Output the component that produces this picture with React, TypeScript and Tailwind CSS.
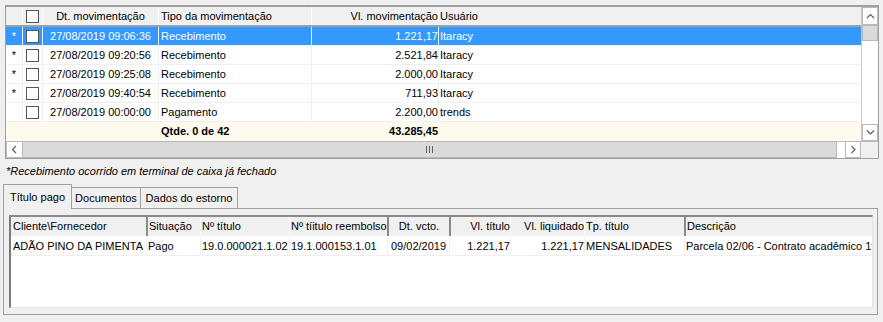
import React from "react";

const rows = [
  { mark: true, dt: "27/08/2019 09:06:36", tipo: "Recebimento", vl: "1.221,17", user: "Itaracy" },
  { mark: true, dt: "27/08/2019 09:20:56", tipo: "Recebimento", vl: "2.521,84", user: "Itaracy" },
  { mark: true, dt: "27/08/2019 09:25:08", tipo: "Recebimento", vl: "2.000,00", user: "Itaracy" },
  { mark: true, dt: "27/08/2019 09:40:54", tipo: "Recebimento", vl: "711,93", user: "Itaracy" },
  { mark: false, dt: "27/08/2019 00:00:00", tipo: "Pagamento", vl: "2.200,00", user: "trends" },
];

const Check = () => <span className="block w-[13px] h-[13px] border border-[#555555] bg-white" />;

const Arrow = ({ dir }: { dir: "up" | "down" | "left" | "right" }) => {
  const pts = {
    up: "1,5 4.5,1.5 8,5",
    down: "1,1.5 4.5,5 8,1.5",
    left: "5,1 1.5,4.5 5,8",
    right: "1.5,1 5,4.5 1.5,8",
  }[dir];
  const vertical = dir === "up" || dir === "down";
  return (
    <svg width={vertical ? 9 : 7} height={vertical ? 7 : 9} viewBox={vertical ? "0 0 9 7" : "0 0 7 9"}>
      <polyline points={pts} fill="none" stroke="#606060" strokeWidth="1.2" />
    </svg>
  );
};

const TopGrid = () => (
  <div className="ml-[5px] mt-[5px] w-[874px] border border-t-2 border-[#a0a0a0] bg-white">
    <div className="flex">
      <div className="w-[855px]">
        {/* header */}
        <div className="flex h-[20px] bg-[#f0f0f0] border-b-2 border-[#a0a0a0]">
          <div className="w-[17px] border-r border-white" />
          <div className="w-[20px] border-r border-white flex items-center justify-center">
            <Check />
          </div>
          <div className="w-[116px] border-r border-white flex items-center justify-center">Dt. movimentação</div>
          <div className="w-[153px] border-r border-white flex items-center pl-[2px]">Tipo da movimentação</div>
          <div className="w-[127px] border-r border-white flex items-center justify-end">Vl. movimentação</div>
          <div className="flex-1 flex items-center pl-[1px]">Usuário</div>
        </div>
        {/* rows */}
        {rows.map((r, i) => {
          const sel = i === 0;
          return (
            <div
              key={i}
              className={`flex h-[19px] border-b border-[#f0f0f0] ${sel ? "bg-[#3399ff] text-white" : "bg-white"}`}
            >
              <div className="w-[17px] border-r border-[#f0f0f0] flex items-center justify-center">
                {r.mark ? "*" : ""}
              </div>
              <div className="w-[20px] border-r border-[#f0f0f0] flex items-center justify-center">
                <Check />
              </div>
              <div className="w-[116px] border-r border-[#f0f0f0] flex items-center justify-center">{r.dt}</div>
              <div className="w-[153px] border-r border-[#f0f0f0] flex items-center pl-[2px]">{r.tipo}</div>
              <div className="w-[127px] border-r border-[#f0f0f0] flex items-center justify-end">{r.vl}</div>
              <div className="flex-1 flex items-center pl-[1px]">{r.user}</div>
            </div>
          );
        })}
        {/* footer */}
        <div className="flex h-[19px] bg-[#fefaee] font-bold">
          <div className="w-[17px]" />
          <div className="w-[20px]" />
          <div className="w-[116px]" />
          <div className="w-[153px] flex items-center pl-[2px]">Qtde. 0 de 42</div>
          <div className="w-[127px] flex items-center justify-end pr-[1px]">43.285,45</div>
          <div className="flex-1" />
        </div>
      </div>
      {/* vertical scrollbar */}
      <div className="w-[17px] h-[134px] flex flex-col bg-white border-l border-[#c8c8c8]">
        <div className="h-[18px] border border-[#b9b9b9] flex items-center justify-center">
          <Arrow dir="up" />
        </div>
        <div className="h-[16px] bg-[#dadada] border border-[#b9b9b9]" />
        <div className="flex-1" />
        <div className="h-[17px] border border-[#b9b9b9] flex items-center justify-center">
          <Arrow dir="down" />
        </div>
      </div>
    </div>
    {/* horizontal scrollbar */}
    <div className="flex h-[17px] border-t border-[#b9b9b9]">
      <div className="w-[17px] bg-white border border-t-0 border-[#b9b9b9] flex items-center justify-center">
        <Arrow dir="left" />
      </div>
      <div className="w-[814px] bg-[#dadada] border-r border-b border-[#b9b9b9] flex items-center justify-center gap-[2px]">
        <span className="w-px h-[7px] bg-[#606060]" />
        <span className="w-px h-[7px] bg-[#606060]" />
        <span className="w-px h-[7px] bg-[#606060]" />
      </div>
      <div className="w-[8px] bg-white" />
      <div className="w-[16px] bg-white border border-t-0 border-[#b9b9b9] flex items-center justify-center">
        <Arrow dir="right" />
      </div>
      <div className="w-[17px] bg-[#f0f0f0]" />
    </div>
  </div>
);

const cols = [
  { t: "Cliente\\Fornecedor", w: "w-[135px]", a: "pl-[2px]", dark: false, v: "ADÃO PINO DA PIMENTA" },
  { t: "Situação", w: "w-[54px]", a: "pl-[1px]", dark: true, v: "Pago" },
  { t: "Nº título", w: "w-[89px]", a: "pl-[1px]", dark: false, v: "19.0.000021.1.02" },
  { t: "Nº tíitulo reembolso", w: "w-[98px]", a: "pl-[1px]", dark: false, v: "19.1.000153.1.01" },
  { t: "Dt. vcto.", w: "w-[62px]", a: "justify-center", dark: true, v: "09/02/2019" },
  { t: "Vl. título", w: "w-[61px]", a: "justify-end", dark: true, v: "1.221,17" },
  { t: "Vl. liquidado", w: "w-[74px]", a: "justify-end", dark: false, v: "1.221,17" },
  { t: "Tp. título", w: "w-[100px]", a: "pl-[1px]", dark: false, v: "MENSALIDADES" },
  { t: "Descrição", w: "w-[188px]", a: "pl-[1px]", dark: true, v: "Parcela 02/06 - Contrato acadêmico 19" },
];

const BottomGrid = () => (
  <div className="h-[93px] bg-white border-t-2 border-l-2 border-t-[#8a8a8a] border-l-[#7a7a7a] border-r border-b border-r-[#e3e3e3] border-b-[#e3e3e3] overflow-hidden">
    <div className="flex h-[20px] bg-[#f0f0f0] border-b border-white">
      {cols.map((c, i) => (
        <div
          key={i}
          className={`${c.w} shrink-0 flex items-center whitespace-nowrap overflow-hidden ${c.a} ${
            i === 0 ? "" : c.dark ? "border-l-2 border-[#8a8a8a]" : "border-l border-white"
          }`}
        >
          {c.t}
        </div>
      ))}
    </div>
    <div className="flex h-[19px] border-b border-[#f0f0f0]">
      {cols.map((c, i) => (
        <div
          key={i}
          className={`${c.w} shrink-0 flex items-center whitespace-nowrap overflow-hidden ${c.a} ${
            i === 0 ? "" : "border-l border-[#f0f0f0]"
          }`}
        >
          {c.v}
        </div>
      ))}
    </div>
  </div>
);

export default function App() {
  return (
    <div className="w-[883px] h-[322px] bg-[#f0f0f0] text-black text-[11px] leading-none font-['Liberation_Sans',Arial,sans-serif] overflow-hidden">
      <TopGrid />
      <div className="h-[25px] flex items-center pl-[6px] italic">
        *Recebimento ocorrido em terminal de caixa já fechado
      </div>
      <div className="ml-[3px] flex items-end h-[24px]">
        <div className="relative z-10 -mb-px h-[25px] w-[69px] bg-[#f0f0f0] border border-b-0 border-[#a0a0a0] flex items-center justify-center">
          Título pago
        </div>
        <div className="-ml-px h-[21px] w-[70px] bg-[#f0f0f0] border border-b-0 border-[#a0a0a0] flex items-center justify-center">
          Documentos
        </div>
        <div className="-ml-px h-[21px] w-[98px] bg-[#f0f0f0] border border-b-0 border-[#a0a0a0] flex items-center justify-center">
          Dados do estorno
        </div>
      </div>
      <div className="ml-[3px] w-[875px] h-[107px] border border-[#a0a0a0] bg-[#f0f0f0] pt-[6px] pl-[5px] pr-[4px] pb-[6px]">
        <BottomGrid />
      </div>
    </div>
  );
}
